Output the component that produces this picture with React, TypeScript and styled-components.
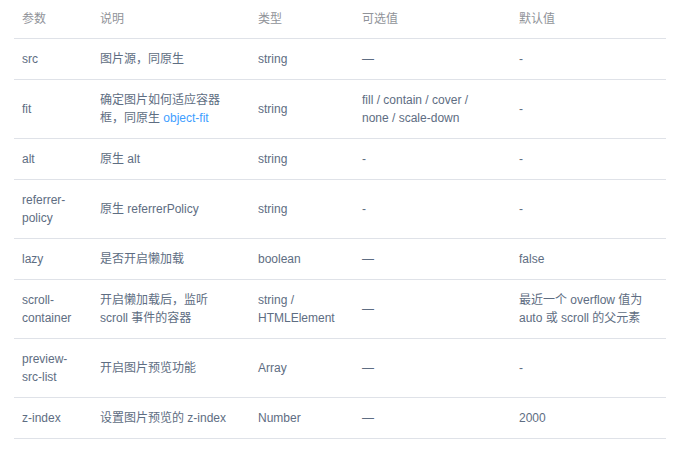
import React from 'react';
import styled, {createGlobalStyle} from 'styled-components';

const GlobalStyle = createGlobalStyle`
    body {
        margin: 0;
        background: #ffffff;
        font-family: "Liberation Sans", Arial, "Noto Sans CJK SC", sans-serif;
    }
`

const Page = styled.div`
    padding: 0 21px 0 14px;
`

const Table = styled.table`
    border-collapse: collapse;
    table-layout: fixed;
    width: 652px;
    font-size: 12px;
    line-height: 18px;
    color: #5e6d82;
`

const Th = styled.th`
    text-align: left;
    font-weight: normal;
    color: #909399;
    padding: 10px 11px;
    border-bottom: 1px solid #dfe2e8;
    white-space: nowrap;

    &:first-child {
        padding-left: 8px;
    }
`

const Td = styled.td`
    text-align: left;
    vertical-align: middle;
    padding: 11px 11px;
    border-bottom: 1px solid #dfe2e8;

    &:first-child {
        padding-left: 8px;
    }
`

const Link = styled.span`
    color: #409eff;
`

type RowType = {
    name: React.ReactNode
    desc: React.ReactNode
    type: React.ReactNode
    options: React.ReactNode
    def: React.ReactNode
}

const rows: RowType[] = [
    {name: 'src', desc: '图片源，同原生', type: 'string', options: '—', def: '-'},
    {
        name: 'fit',
        desc: <>确定图片如何适应容器框，同原生 <Link>object-fit</Link></>,
        type: 'string',
        options: 'fill / contain / cover / none / scale-down',
        def: '-'
    },
    {name: 'alt', desc: '原生 alt', type: 'string', options: '-', def: '-'},
    {name: <>referrer-<br/>policy</>, desc: '原生 referrerPolicy', type: 'string', options: '-', def: '-'},
    {name: 'lazy', desc: '是否开启懒加载', type: 'boolean', options: '—', def: 'false'},
    {
        name: <>scroll-<br/>container</>,
        desc: <>开启懒加载后，监听<br/>scroll 事件的容器</>,
        type: <>string /<br/>HTMLElement</>,
        options: '—',
        def: <>最近一个 overflow 值为<br/>auto 或 scroll 的父元素</>
    },
    {name: <>preview-<br/>src-list</>, desc: '开启图片预览功能', type: 'Array', options: '—', def: '-'},
    {name: 'z-index', desc: '设置图片预览的 z-index', type: 'Number', options: '—', def: '2000'},
]

const widths = [75, 158, 104, 157, 158]
const headers = ['参数', '说明', '类型', '可选值', '默认值']

export default function App() {
    return (
        <Page>
            <GlobalStyle/>
            <Table>
                <colgroup>
                    {widths.map((w, i) => <col key={i} style={{width: w}}/>)}
                </colgroup>
                <thead>
                <tr>
                    {headers.map(h => <Th key={h}>{h}</Th>)}
                </tr>
                </thead>
                <tbody>
                {rows.map((r, i) => (
                    <tr key={i}>
                        <Td>{r.name}</Td>
                        <Td>{r.desc}</Td>
                        <Td>{r.type}</Td>
                        <Td>{r.options}</Td>
                        <Td>{r.def}</Td>
                    </tr>
                ))}
                </tbody>
            </Table>
        </Page>
    );
}
